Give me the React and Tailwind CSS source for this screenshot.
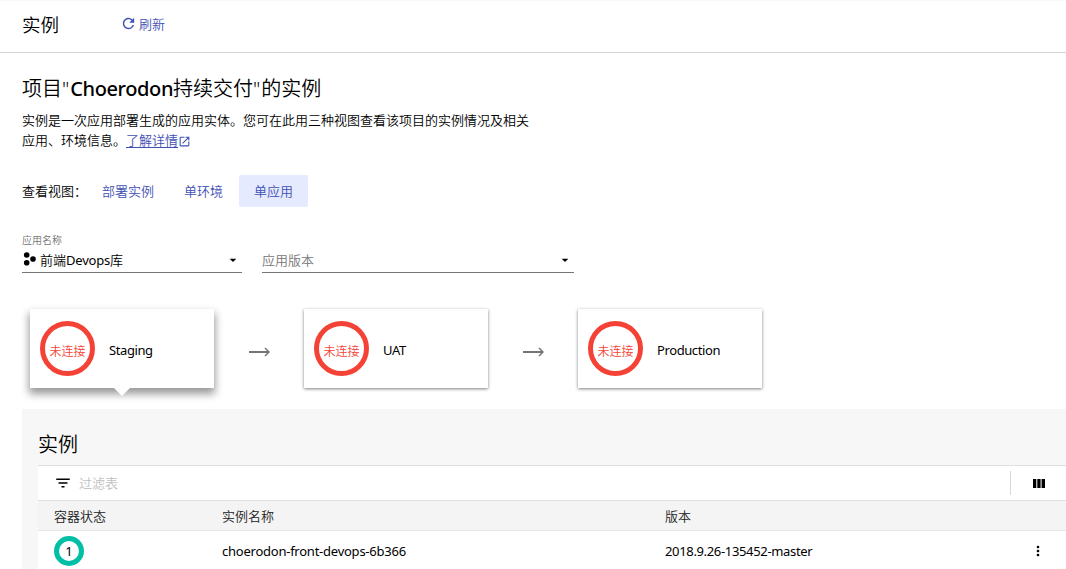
import React from "react";
import { MdRefresh, MdOpenInNew, MdFilterList, MdMoreVert, MdArrowDropDown } from "react-icons/md";

function Stage({ name, active }) {
  return (
    <div
      className={
        "relative flex h-[79px] w-[184px] items-center bg-white " +
        (active
          ? "shadow-[0_5px_8px_1px_rgba(0,0,0,0.4)]"
          : "shadow-[0_1px_3px_rgba(0,0,0,0.5)]")
      }
    >
      <div className="ml-[10px] flex size-[55px] items-center justify-center rounded-full border-[5px] border-[#f44336] pt-[6px] text-[12px] leading-[18px] whitespace-nowrap text-[#f44336]">
        未连接
      </div>
      <div className="ml-[14px] pt-[2px] font-normal tracking-[-0.4px]">{name}</div>
      {active && (
        <svg className="absolute top-[79px] left-[84px]" width="16" height="8">
          <path d="M0 0H16L8 8Z" fill="#fff" />
        </svg>
      )}
    </div>
  );
}

function Arrow() {
  return (
    <svg className="mr-[34px] ml-[35px] mt-[7px]" width="21" height="10" viewBox="0 0 21 10" fill="none" stroke="#757575">
      <path d="M0 5H20" strokeWidth="2" />
      <path d="M16 1L20 5L16 9" strokeWidth="1.5" />
    </svg>
  );
}

function Caret() {
  return <MdArrowDropDown size={16} className="mr-px shrink-0 text-black" />;
}

export default function App() {
  return (
    <div className="h-[569px] w-full overflow-hidden bg-white font-['Noto_Sans','Noto_Sans_CJK_SC',sans-serif] text-[13px] leading-5 font-[350] text-black">
      <header className="flex h-[53px] items-center border-t border-b border-t-[#f8f8f8] border-b-[#d3d3d3] pb-1 pl-[22px]">
        <h1 className="w-[98px] text-[18.5px] leading-6">实例</h1>
        <button className="flex items-center gap-[3px] pb-[2px] text-[#3f51b5]">
          <MdRefresh size={17} className="-mr-px" />
          <span>刷新</span>
        </button>
      </header>

      <main className="pl-[22px]">
        <h2 className="mt-[22px] h-[28px] text-[20px] leading-[28px]">
          项目<span className="tracking-[1px]">"</span>
          <span className="font-medium tracking-[-0.4px]">Choerodon</span>持续交付
          <span className="tracking-[1px]">"</span>的实例
        </h2>
        <p className="mt-[7px] h-10 w-[516px]">
          实例是一次应用部署生成的应用实体。您可在此用三种视图查看该项目的实例情况及相关
          <br />
          应用、环境信息。
          <a className="text-[#3f51b5]">
            <span className="underline underline-offset-2">了解详情</span>
            <MdOpenInNew size={13} className="inline" />
          </a>
        </p>

        <div className="mt-[25px] flex h-8 items-center">
          <span className="w-[65px] pb-px whitespace-nowrap">查看视图：</span>
          <button className="h-8 px-[15px] pb-px text-[#3f51b5]">部署实例</button>
          <button className="mr-px h-8 px-[15px] pb-px text-[#3f51b5]">单环境</button>
          <button className="h-8 w-[69px] rounded-[2px] bg-[#e6eafe] pb-px text-[#3f51b5]">单应用</button>
        </div>

        <div className="mt-[27px] flex h-[39px] gap-5">
          <div className="flex w-[220px] flex-col border-b border-[#757575]">
            <div className="h-[14px] text-[10px] leading-[13px] text-[#757575]">应用名称</div>
            <div className="flex h-[24px] items-center">
              <svg width="14" height="14" viewBox="0 0 14 14" className="mr-1 -mt-[3px] shrink-0">
                <circle cx="4.7" cy="3" r="2.8" />
                <circle cx="4.7" cy="10.7" r="2.8" />
                <circle cx="11" cy="7" r="2.8" />
              </svg>
              <span className="flex-1">
                前端<span className="font-normal tracking-[-0.2px]">Devops</span>库
              </span>
              <Caret />
            </div>
          </div>
          <div className="flex w-[312px] items-center border-b border-[#757575] pt-[14px]">
            <span className="flex-1 text-[#757575]">应用版本</span>
            <Caret />
          </div>
        </div>

        <div className="mt-9 ml-2 flex items-center">
          <Stage name="Staging" active />
          <Arrow />
          <Stage name="UAT" />
          <Arrow />
          <Stage name="Production" />
        </div>

        <section className="mt-[21px] h-[160px] bg-[#f7f7f7] pl-4">
          <h3 className="h-[56px] pt-[22px] text-[20px] leading-[28px]">实例</h3>
          <div className="flex h-[35px] items-center border-t border-[#e0e0e0] bg-white">
            <MdFilterList size={18} className="ml-4" />
            <span className="ml-[7px] flex-1 text-[#bfbfbf]">过滤表</span>
            <div className="flex h-6 w-14 items-center border-l border-[#d9d9d9] pl-[22px]">
              <svg width="12" height="9" viewBox="0 0 12 9">
                <path d="M0 0H3.3V9H0ZM4.3 0H7.6V9H4.3ZM8.6 0H12V9H8.6Z" />
              </svg>
            </div>
          </div>
          <div className="flex h-[31px] items-center border-t border-b border-t-[#e0e0e0] border-b-[#e8e8e8] bg-[#f4f4f4] pt-px pl-4 text-[#212121]">
            <span className="w-[168px]">容器状态</span>
            <span className="w-[443px]">实例名称</span>
            <span>版本</span>
          </div>
          <div className="flex h-[40px] items-center bg-white pl-4 font-normal">
            <div className="w-[168px]">
              <div className="flex size-[30px] items-center justify-center rounded-full border-[5px] border-[#00bfa5]">1</div>
            </div>
            <span className="w-[443px] tracking-[-0.24px]">choerodon-front-devops-6b366</span>
            <span className="flex-1 tracking-[-0.34px]">2018.9.26-135452-master</span>
            <MdMoreVert size={16} className="mr-5" />
          </div>
        </section>
      </main>
    </div>
  );
}
